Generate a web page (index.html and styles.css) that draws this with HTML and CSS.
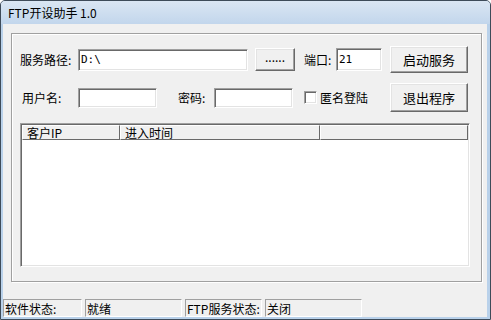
FILE: index.html
```html
<!DOCTYPE html>
<html lang="zh-CN">
<head>
    <meta charset="UTF-8">
    <title>FTP开设助手 1.0</title>
    <link rel="stylesheet" href="styles.css">
</head>
<body>

    <div class="window">
        <div class="titlebar">FTP开设助手 1.0</div>

        <div class="client">
            <div class="group">
                <div class="row row-top">
                    <label class="lbl lbl-path" for="path">服务路径:</label>
                    <input type="text" id="path" class="edit edit-path" value="D:\">
                    <button class="btn btn-browse">......</button>
                    <label class="lbl lbl-port" for="port">端口:</label>
                    <input type="text" id="port" class="edit edit-port" value="21">
                    <button class="btn btn-big btn-start">启动服务</button>
                </div>

                <div class="row row-user">
                    <label class="lbl lbl-user" for="user">用户名:</label>
                    <input type="text" id="user" class="edit edit-small">
                    <label class="lbl lbl-pass" for="pass">密码:</label>
                    <input type="text" id="pass" class="edit edit-small">
                    <input type="checkbox" id="anon" class="check">
                    <label class="lbl lbl-anon" for="anon">匿名登陆</label>
                    <button class="btn btn-big btn-quit">退出程序</button>
                </div>

                <div class="listview">
                    <div class="list-head">
                        <div class="col col-ip">客户IP</div>
                        <div class="col col-time">进入时间</div>
                        <div class="col col-rest"></div>
                    </div>
                    <div class="list-body"></div>
                </div>
            </div>

            <div class="statusbar">
                <div class="pane pane-1">软件状态:</div>
                <div class="pane pane-2">就绪</div>
                <div class="pane pane-3">FTP服务状态:</div>
                <div class="pane pane-4">关闭</div>
            </div>
        </div>
    </div>

</body>
</html>
```

FILE: styles.css
```css
body {
    margin: 0;
    font-family: "Noto Sans CJK SC", "DejaVu Sans", sans-serif;
    font-size: 12px;
    color: #000;
    background: #fff;
}
.window {
    width: 491px;
    height: 320px;
    box-sizing: border-box;
    border: 1px solid #3e4b59;
    border-radius: 5px 5px 0 0;
    background: #b9d1ea;
    display: flex;
    flex-direction: column;
    overflow: hidden;
}
.titlebar {
    height: 23px;
    line-height: 23px;
    padding-left: 7px;
    font-size: 12px;
    background: linear-gradient(#dae6f3, #c2d6ec);
}
.client {
    flex: 1;
    margin: 0 3px 2px 2px;
    background: #f0f0f0;
    display: flex;
    flex-direction: column;
}
.group {
    width: 471px;
    height: 249px;
    margin: 9px 0 0 8px;
    box-sizing: border-box;
    border: 1px solid #a0a0a0;
    box-shadow: 1px 1px 0 #fff, inset 1px 1px 0 #fff;
    padding: 12px 0 0 8px;
}
.row {
    display: flex;
    align-items: center;
}
.row-top {
    height: 27px;
}
.row-user {
    height: 29px;
    margin-top: 10px;
}
.lbl {
    white-space: nowrap;
    line-height: 16px;
}
.lbl-path {
    width: 58px;
}
.lbl-port {
    width: 32px;
    margin-left: 9px;
}
.lbl-user {
    width: 56px;
    padding-left: 2px;
}
.lbl-pass {
    width: 36px;
    margin-left: 21px;
}
.lbl-anon {
    width: 48px;
    margin-left: 3px;
}
.edit {
    box-sizing: border-box;
    margin: 0;
    padding: 0 0 0 2px;
    background: #fff;
    border: 1px solid;
    border-color: #a0a0a0 #fff #fff #a0a0a0;
    box-shadow: inset 1px 1px 0 #696969, inset -1px -1px 0 #e3e3e3;
    font-family: "DejaVu Sans Mono", "Liberation Mono", monospace;
    font-size: 11px;
    outline: none;
}
.edit-path {
    width: 170px;
    height: 22px;
}
.edit-port {
    width: 46px;
    height: 23px;
}
.edit-small {
    width: 79px;
    height: 20px;
}
.btn {
    box-sizing: border-box;
    margin: 0;
    padding: 0;
    background: #f0f0f0;
    border: 1px solid;
    border-color: #fff #696969 #696969 #fff;
    box-shadow: inset -1px -1px 0 #a0a0a0, inset 1px 1px 0 #e3e3e3;
    font-family: "Noto Sans CJK SC", sans-serif;
    font-size: 12px;
    color: #000;
}
.btn-browse {
    width: 40px;
    height: 23px;
    margin-left: 7px;
    line-height: 10px;
    padding-bottom: 6px;
}
.btn-big {
    width: 78px;
    margin-left: 8px;
    font-size: 13px;
}
.btn-start {
    height: 27px;
}
.btn-quit {
    height: 29px;
    margin-left: 22px;
}
.check {
    appearance: none;
    width: 13px;
    height: 13px;
    margin: 0 0 0 11px;
    background: #fff;
    border: 1px solid;
    border-color: #a0a0a0 #fff #fff #a0a0a0;
    box-shadow: inset 1px 1px 0 #696969, inset -1px -1px 0 #e3e3e3;
    box-sizing: border-box;
}
.listview {
    width: 450px;
    height: 144px;
    margin-top: 11px;
    box-sizing: border-box;
    border: 1px solid;
    border-color: #a0a0a0 #fff #fff #a0a0a0;
    box-shadow: inset 1px 1px 0 #696969, inset -1px -1px 0 #e3e3e3;
    padding: 1px;
    background: #fff;
    display: flex;
    flex-direction: column;
}
.list-head {
    display: flex;
    height: 15px;
}
.col {
    box-sizing: border-box;
    height: 15px;
    line-height: 14px;
    padding-left: 4px;
    background: #f0f0f0;
    border: 1px solid;
    border-color: #fff #696969 #696969 #fff;
    font-family: "Noto Sans CJK SC", sans-serif;
    white-space: nowrap;
}
.col-ip {
    width: 98px;
}
.col-time {
    width: 200px;
}
.col-rest {
    flex: 1;
}
.list-body {
    flex: 1;
    background: #fff;
}
.statusbar {
    margin-top: auto;
    display: flex;
    gap: 3px;
    height: 18px;
}
.pane {
    box-sizing: border-box;
    height: 18px;
    line-height: 17px;
    padding-left: 1px;
    border: 1px solid;
    border-color: #a0a0a0 #fff #fff #a0a0a0;
    white-space: nowrap;
}
.pane-1 {
    width: 79px;
}
.pane-2 {
    width: 97px;
}
.pane-3 {
    width: 77px;
}
.pane-4 {
    width: 97px;
}
```
